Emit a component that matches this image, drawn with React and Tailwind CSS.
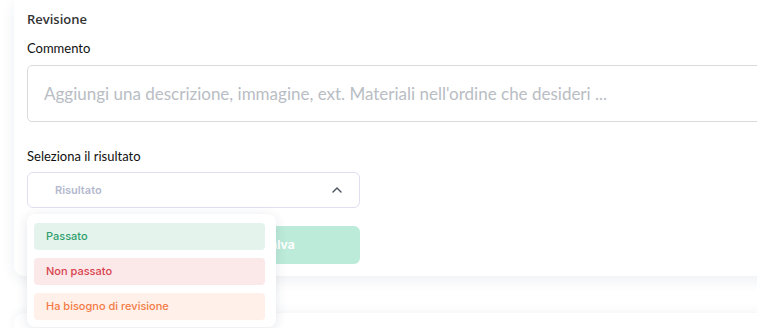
import React from "react";

export default function App() {
  return (
    <div className="relative w-[757px] h-[328px] overflow-hidden bg-white font-['Lato',sans-serif]">
      <div className="pl-[14px]">
        <div className="w-[800px] rounded-bl-[10px] bg-white shadow-[0_4px_14px_rgba(30,50,90,0.08)] pl-[13px] pt-[10px] pb-[12px]">
          <div className="h-[18px] leading-[18px] text-[13px] font-semibold text-[#333] font-['Open_Sans',sans-serif]">Revisione</div>
          <div className="mt-[12px] h-[16px] leading-[16px] text-[13px] text-[#111]">Commento</div>
          <div className="mt-[9px] h-[57px] w-[760px] rounded-[5px] border border-[#d9dadd] flex items-center pl-[16px]">
            <span className="text-[17px] text-[#b9bdc4]">Aggiungi una descrizione, immagine, ext. Materiali nell'ordine che desideri ...</span>
          </div>
          <div className="mt-[26px] h-[16px] leading-[16px] text-[13px] text-[#111]">Seleziona il risultato</div>
          <div className="mt-[8px] h-[36px] w-[333px] rounded-[6px] border border-[#e2def0] flex items-center justify-between pl-[27px] pr-[17px]">
            <span className="text-[11px] font-semibold text-[#b5b9cf] font-['Inter',sans-serif]">Risultato</span>
            <svg width="10" height="6" viewBox="0 0 10 6" fill="none" stroke="#4b5060" strokeWidth="1.4" strokeLinecap="round" strokeLinejoin="round">
              <path d="M1 5 L5 1 L9 5" />
            </svg>
          </div>
          <div className="mt-[18px] w-[333px] flex gap-[5px]">
            <div className="h-[38px] flex-1 rounded-[6px] border border-[#e2e4ea] bg-white flex items-center justify-center text-[12px] font-bold text-[#555] font-['Inter',sans-serif]">Annulla</div>
            <div className="h-[38px] flex-1 rounded-[6px] bg-[#bdebd9] flex items-center justify-center text-[12px] font-bold text-white font-['Inter',sans-serif]">Salva</div>
          </div>
        </div>
        <div className="mt-[37px] w-[800px] h-[40px] rounded-tl-[10px] bg-white shadow-[0_-2px_10px_rgba(30,50,90,0.05)]"></div>
      </div>

      <div className="absolute left-[27px] top-[214px] w-[249px] h-[113px] rounded-[8px] bg-white shadow-[0_2px_12px_rgba(30,50,90,0.12)] pl-[7px] pr-[11px] pt-[9px] flex flex-col gap-[8px] font-['Inter',sans-serif] text-[11px] font-medium">
        <div className="h-[27px] rounded-[4px] bg-[#e4f4ed] text-[#2f9e6e] flex items-center pl-[12px]">Passato</div>
        <div className="h-[27px] rounded-[4px] bg-[#fbe9e9] text-[#d8424e] flex items-center pl-[12px]">Non passato</div>
        <div className="h-[27px] rounded-[4px] bg-[#fff0ea] text-[#f47b45] flex items-center pl-[12px]">Ha bisogno di revisione</div>
      </div>
    </div>
  );
}
